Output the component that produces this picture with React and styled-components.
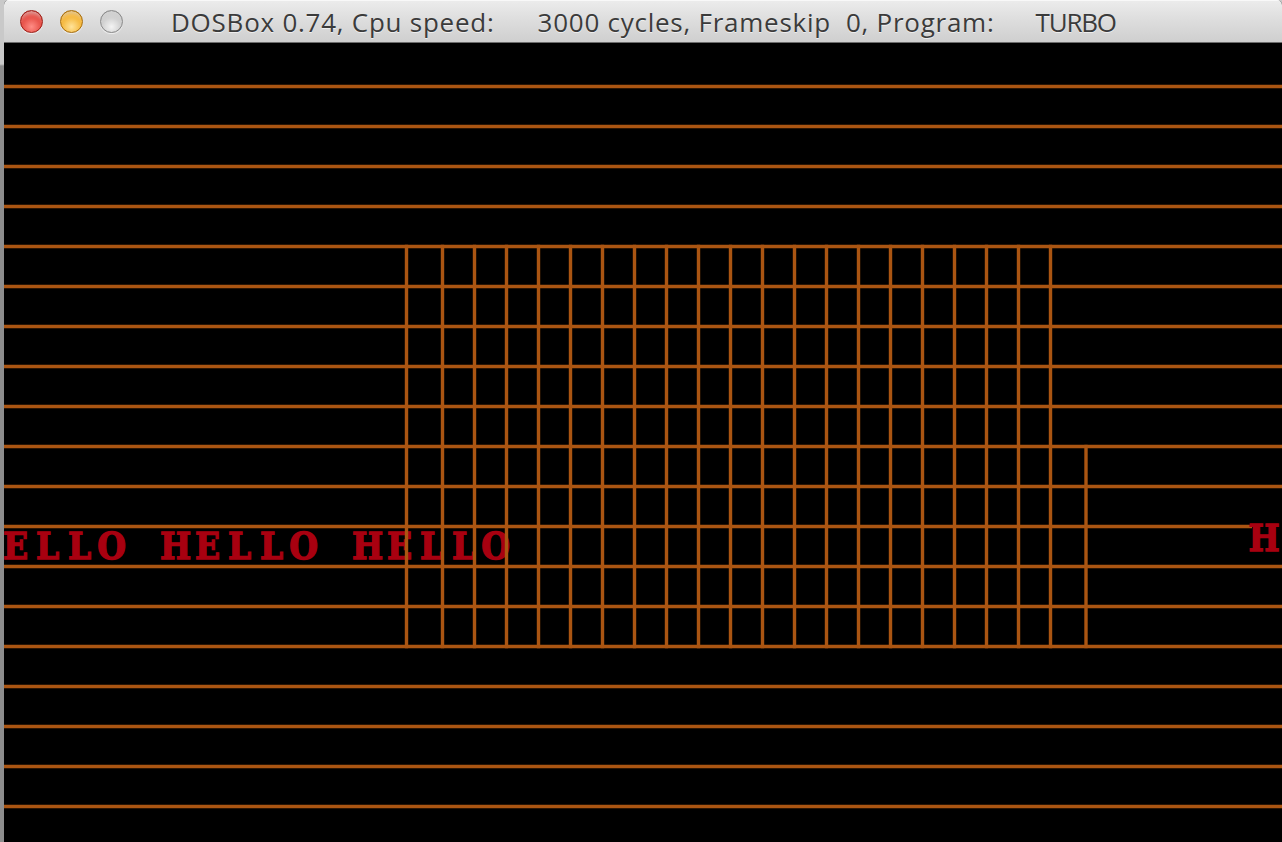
import React from "react";
import styled, { createGlobalStyle } from "styled-components";

const GlobalStyle = createGlobalStyle`
  html, body {
    margin: 0;
    padding: 0;
    background: #a3a3a3;
    overflow: hidden;
  }
`;

const LINE = "#aa5512";
const RED = "#a80010";
const SX = 0.88; // horizontal squeeze so the serif face fits the 32px DOS cells

const Desktop = styled.div`
  display: flex;
  height: 842px;
  padding-left: 4px;
  background: linear-gradient(#c9c9c9 0, #c9c9c9 64px, #8d8d8d 66px, #8d8d8d 100%);
`;

const Window = styled.div`
  flex: 1;
  display: flex;
  flex-direction: column;
  border-radius: 5px 5px 0 0;
  overflow: hidden;
  background: #000;
`;

const TitleBar = styled.div`
  height: 42px;
  flex: none;
  display: flex;
  align-items: center;
  padding-left: 16px;
  border-bottom: 1px solid #6d6d6d;
  background: linear-gradient(#ececec, #dedede 45%, #cfcfcf);
  box-shadow: inset 0 1px 0 #f8f8f8;
`;

const Lights = styled.div`
  display: flex;
  gap: 17px;
`;

const lightColors = {
  close: ["#ff8d86", "#e2453c", "#9e1d16"],
  min: ["#ffe39a", "#f3b12e", "#a96e0c"],
  zoom: ["#f4f4f4", "#c9c9c9", "#8a8a8a"],
};

const Light = styled.span`
  width: 23px;
  height: 23px;
  border-radius: 50%;
  box-sizing: border-box;
  border: 1px solid ${(p) => lightColors[p.$kind][2]};
  background: radial-gradient(
    circle at 50% 75%,
    ${(p) => lightColors[p.$kind][0]} 0,
    ${(p) => lightColors[p.$kind][1]} 60%,
    ${(p) => lightColors[p.$kind][2]} 100%
  );
  box-shadow: 0 1px 1px rgba(255, 255, 255, 0.6), inset 0 6px 4px -3px rgba(255, 255, 255, 0.55);
`;

const Title = styled.div`
  display: flex;
  margin-left: 48px;
  font-family: "Open Sans", "DejaVu Sans", sans-serif;
  font-size: 26px;
  letter-spacing: 0.75px;
  color: #3b3b3b;
  text-shadow: 0 1px 0 rgba(255, 255, 255, 0.6);
  white-space: pre;
  line-height: 1;
  padding-top: 2px;
`;

const TitlePart = styled.span`
  margin-left: ${(p) => p.$gap || 0}px;
  letter-spacing: ${(p) => (p.$tight ? "-1.2px" : "inherit")};
`;

const Screen = styled.div`
  flex: 1;
  background: #000;
  overflow: hidden;
`;

// horizontal raster lines every 40px, relative to the screen origin
const rows = Array.from({ length: 19 }, (_, k) => 43.5 + 40 * k);
const cols = [402.5, 438.5, ...Array.from({ length: 19 }, (_, k) => 470.5 + 32 * k)];
// one x per glyph (glyph centre), pre-divided by the squeeze factor
const cells = (centre, text) =>
  text
    .split("")
    .map((_, i) => ((centre + 32 * i) / SX).toFixed(1))
    .join(" ");

const dosText = {
  fill: RED,
  stroke: RED,
  strokeWidth: 1.4,
  fontFamily: "'DejaVu Serif', 'Liberation Serif', serif",
  fontWeight: "bold",
  fontSize: 37.5,
  textAnchor: "middle",
  transform: `scale(${SX} 1)`,
};

function DosCanvas() {
  return (
    <svg width="1278" height="799" viewBox="0 0 1278 799">
      {rows.map((y) => (
        <line key={y} x1="0" x2="1278" y1={y} y2={y} stroke={LINE} strokeWidth="3.4" />
      ))}
      <text x={cells(-20.4, "HELLO HELLO HELLO")} y="516" {...dosText}>
        HELLO HELLO HELLO
      </text>
      {cols.map((x) => (
        <line key={x} x1={x} x2={x} y1="201.8" y2="605.2" stroke={LINE} strokeWidth="3.4" />
      ))}
      <line x1="1082" x2="1082" y1="401.8" y2="605.2" stroke={LINE} strokeWidth="3.4" />
      <rect x="1248" y="477" width="30" height="36" fill="#000" />
      <text x={cells(1260, "H")} y="508.5" {...dosText}>
        H
      </text>
    </svg>
  );
}

export default function App() {
  return (
    <>
      <GlobalStyle />
      <Desktop>
        <Window>
          <TitleBar>
            <Lights>
              <Light $kind="close" />
              <Light $kind="min" />
              <Light $kind="zoom" />
            </Lights>
            <Title>
              <TitlePart>DOSBox 0.74, Cpu speed:</TitlePart>
              <TitlePart $gap={43}>3000 cycles, Frameskip  0, Program:</TitlePart>
              <TitlePart $gap={41} $tight>TURBO</TitlePart>
            </Title>
          </TitleBar>
          <Screen>
            <DosCanvas />
          </Screen>
        </Window>
      </Desktop>
    </>
  );
}
